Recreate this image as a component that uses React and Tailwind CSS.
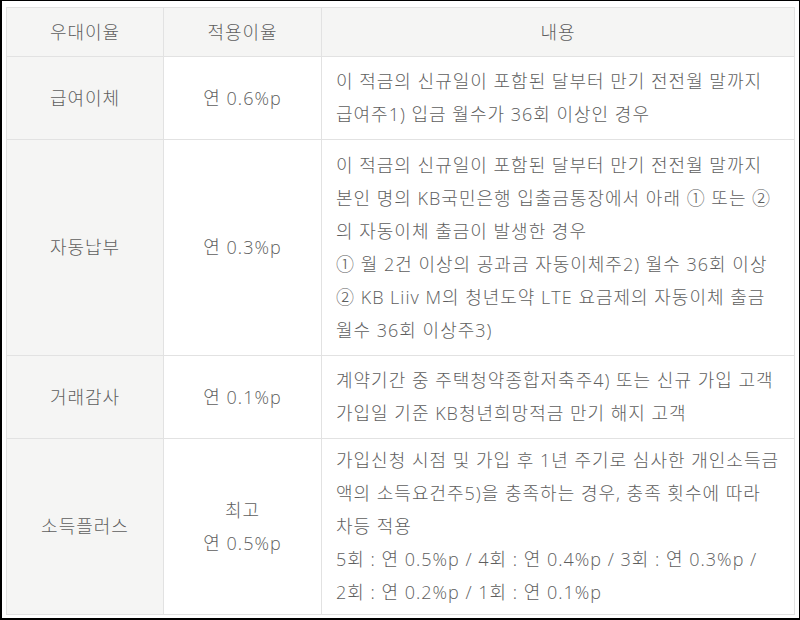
import React from 'react';

const rows = [
  {
    name: '급여이체',
    rate: ['연 0.6%p'],
    lines: [
      '이 적금의 신규일이 포함된 달부터 만기 전전월 말까지',
      '급여주1) 입금 월수가 36회 이상인 경우',
    ],
    h: 'h-[83px]',
  },
  {
    name: '자동납부',
    rate: ['연 0.3%p'],
    lines: [
      '이 적금의 신규일이 포함된 달부터 만기 전전월 말까지',
      '본인 명의 KB국민은행 입출금통장에서 아래 ① 또는 ②',
      '의 자동이체 출금이 발생한 경우',
      '① 월 2건 이상의 공과금 자동이체주2) 월수 36회 이상',
      '② KB Liiv M의 청년도약 LTE 요금제의 자동이체 출금',
      '월수 36회 이상주3)',
    ],
    h: 'h-[216px]',
  },
  {
    name: '거래감사',
    rate: ['연 0.1%p'],
    lines: [
      '계약기간 중 주택청약종합저축주4) 또는 신규 가입 고객',
      '가입일 기준 KB청년희망적금 만기 해지 고객',
    ],
    h: 'h-[83px]',
  },
  {
    name: '소득플러스',
    rate: ['최고', '연 0.5%p'],
    lines: [
      '가입신청 시점 및 가입 후 1년 주기로 심사한 개인소득금',
      '액의 소득요건주5)을 충족하는 경우, 충족 횟수에 따라',
      '차등 적용',
      '5회 : 연 0.5%p / 4회 : 연 0.4%p / 3회 : 연 0.3%p /',
      '2회 : 연 0.2%p / 1회 : 연 0.1%p',
    ],
    h: 'h-[176px]',
  },
];

export default function App() {
  return (
    <div className="w-[800px] h-[620px] box-border border-black border-t border-l-2 border-r border-b-2 bg-white pt-[6px] pl-[4px] font-['Open_Sans','Noto_Sans_CJK_KR',sans-serif] font-light text-[#5e5e5e] text-[18px] tracking-[1px]">
      <table className="w-[789px] border-collapse border border-[#e2e2e2] table-fixed">
        <colgroup>
          <col className="w-[157px]" />
          <col className="w-[158px]" />
          <col />
        </colgroup>
        <thead>
          <tr className="h-[49px] bg-[#f5f5f4]">
            <th className="border border-[#e2e2e2] font-light text-center">우대이율</th>
            <th className="border border-[#e2e2e2] font-light text-center">적용이율</th>
            <th className="border border-[#e2e2e2] font-light text-center">내용</th>
          </tr>
        </thead>
        <tbody>
          {rows.map((r) => (
            <tr key={r.name} className={r.h}>
              <td className="border border-[#e2e2e2] bg-[#f5f5f4] text-center align-middle">{r.name}</td>
              <td className="border border-[#e2e2e2] text-center align-middle leading-[33px]">
                {r.rate.map((t) => (
                  <div key={t}>{t}</div>
                ))}
              </td>
              <td className="border border-[#e2e2e2] pl-[14px] pr-1 align-middle leading-[33px] whitespace-nowrap">
                {r.lines.map((t) => (
                  <div key={t}>{t}</div>
                ))}
              </td>
            </tr>
          ))}
        </tbody>
      </table>
    </div>
  );
}
